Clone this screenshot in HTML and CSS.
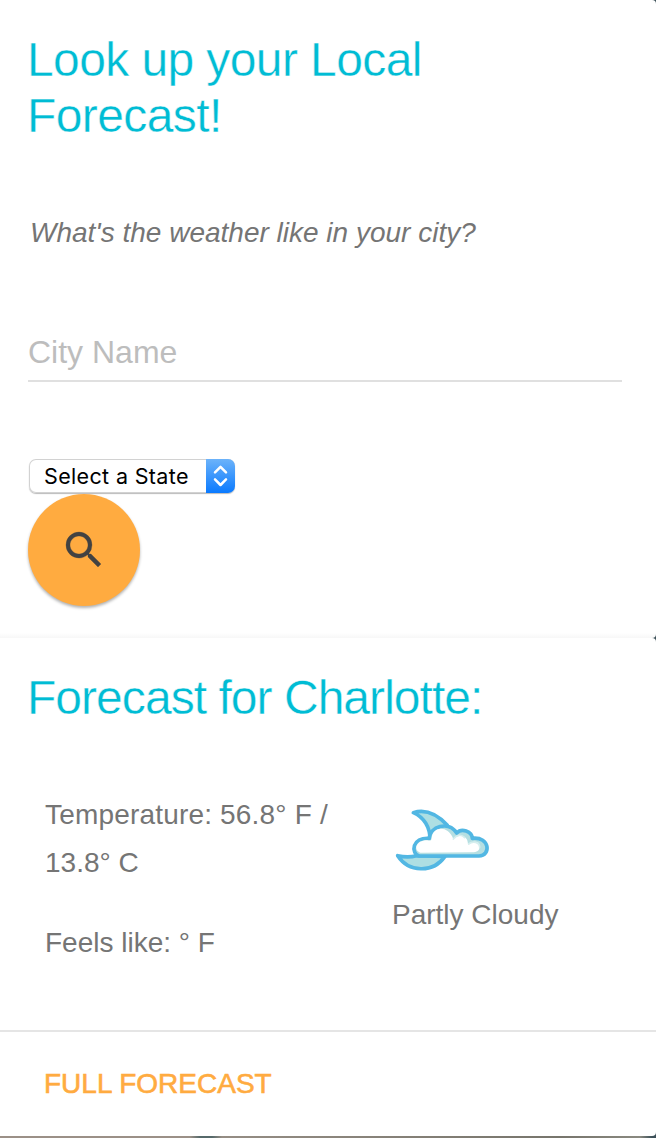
FILE: index.html
```html
<!DOCTYPE html>
<html lang="en">
<head>
<meta charset="utf-8">
<title>Local Forecast</title>
<link rel="stylesheet" href="styles.css">
</head>
<body>
<main class="page">
  <section class="card lookup">
    <h1 class="title">Look up your Local<br>Forecast!</h1>
    <p class="question"><span>What's the weather like in your city?</span></p>
    <input class="city" type="text" placeholder="City Name" aria-label="City Name">
    <button class="state" type="button">
      <span class="state-label">Select a State</span>
      <span class="state-arrows">
        <svg width="29" height="34" viewBox="0 0 29 34" fill="none" stroke="#fff" stroke-width="2.5" stroke-linecap="round" stroke-linejoin="round"><path d="M9 13.4l5.5-5.6 5.5 5.6M9 20.4l5.5 5.6 5.5-5.6"/></svg>
      </span>
    </button>
    <button class="search" type="button" aria-label="Search">
      <svg width="48" height="48" viewBox="0 0 24 24" fill="#424242" stroke="#424242" stroke-width=".15"><path d="M15.5 14h-.79l-.28-.27A6.471 6.471 0 0 0 16 9.5 6.5 6.5 0 1 0 9.5 16c1.61 0 3.09-.59 4.23-1.57l.27.28v.79l5 4.99L20.49 19l-4.99-5zm-6 0C7.01 14 5 11.99 5 9.5S7.01 5 9.5 5 14 7.01 14 9.5 11.99 14 9.5 14z"/></svg>
    </button>
  </section>
  <section class="card forecast">
    <h2 class="title city-title">Forecast for Charlotte:</h2>
    <div class="details">
      <div class="readings">
        <p class="temperature"><span class="wide">Temperature: 56.8° F /</span><br>13.8° C</p>
        <p class="feels">Feels like: ° F</p>
      </div>
      <div class="sky">
        <svg class="sky-icon" width="100" height="80" viewBox="36 30 300 240" stroke-linejoin="round" stroke-linecap="round">
          <path d="M100 68C145 54 178 80 202 106L150 150C151 112 132 82 100 68Z" fill="#addfe3" stroke="#52b7e3" stroke-width="11"/>
          <path d="M53 197C86 247 158 251 195 199L110 197C88 203 74 202 53 197Z" fill="#addfe3" stroke="#52b7e3" stroke-width="11"/>
          <path d="M118 198C91 190 96 141 148 145C149 110 205 91 230 129C244 113 276 123 277 145C331 139 333 198 297 198Z" fill="#b5dfe2" stroke="#52b7e3" stroke-width="11"/>
          <path d="M121 188C98 180 109 150 142 151C153 153 154 151 155 143C159 108 205 105 220 147C235 130 264 134 264 163C280 151 299 154 299 168C299 184 290 186 277 187Z" fill="#fff"/>
          <path d="M220 147C230 134 244 132 254 143M266 162C279 151 299 157 299 172" fill="none" stroke="#d5eeee" stroke-width="5"/>
        </svg>
        <p class="condition">Partly Cloudy</p>
      </div>
    </div>
    <footer class="action"><a class="full">FULL FORECAST</a></footer>
  </section>
</main>
</body>
</html>
```
FILE: styles.css
```css
* { box-sizing: border-box; }
body { margin: 0; background: #fff; font-family: "Liberation Sans", Arial, sans-serif; color: #757575; }
h1, h2, p { margin: 0; }
button, input { font: inherit; padding: 0; border: 0; outline: 0; }
.page {
  width: 656px; height: 1138px; display: flex; flex-direction: column; overflow: hidden;
  background: linear-gradient(90deg, #9b9087 0 190px, #56696a 200px 212px, #958d84 222px, #77756c 560px, #8a8980 640px, #3c5058 652px);
}
.card { background: #fff; border-radius: 0 4px 4px 0; }
.lookup {
  height: 638px; padding: 32px 34px 0 27px;
  display: flex; flex-direction: column; align-items: flex-start;
  background: linear-gradient(#fff 633px, #f7f7f7 638px);
}
.title { color: #00bcd4; font-size: 48px; line-height: 56px; font-weight: 400; white-space: nowrap; letter-spacing: -.6px; -webkit-text-stroke: .4px #fff; }
.question { margin: 65px 0 0 3px; font-size: 28px; line-height: 48px; font-style: italic; white-space: nowrap; }
.city { width: 594px; height: 60px; margin: 65px 0 0 1px; padding-top: 3px; border-bottom: 2px solid #e0e0e0; font-size: 32px; background: none; }
.city::placeholder { color: #bdbdbd; opacity: 1; }
.state {
  display: flex; width: 206px; height: 34px; margin: 77px 0 0 2px; overflow: hidden;
  border-radius: 7px; background: #fff; box-shadow: inset 0 0 0 1px #d2d2d2, 0 1px 1px #bbb;
}
.state-label { width: 177px; padding-left: 15px; text-align: left; font-family: Inter, sans-serif; font-size: 21.5px; letter-spacing: .35px; line-height: 34px; color: #000; white-space: nowrap; }
.state-arrows { width: 29px; height: 34px; background: linear-gradient(#6cb3fa, #0a7aff); }
.state-arrows svg, .search svg { display: block; }
.search {
  width: 112px; height: 112px; margin: 1px 0 0 1px; border-radius: 50%; background: #ffab40;
  display: grid; place-items: center; box-shadow: 0 2px 3px rgba(0,0,0,.3);
}
.forecast { height: 498px; padding-top: 32px; display: flex; flex-direction: column; }
.city-title { padding-left: 27px; letter-spacing: -.96px; }
.details { display: flex; height: 304px; padding: 65px 0 0 45px; font-size: 28px; line-height: 48px; white-space: nowrap; }
.wide { letter-spacing: .18px; }
.readings { width: 347px; }
.feels { margin-top: 32px; }
.sky { padding-top: 9px; }
.sky-icon { display: block; }
.condition { margin-top: 11px; }
.action { height: 106px; padding: 28px 0 0 44px; border-top: 2px solid #e5e5e5; }
.full { display: block; color: #ffab40; font-size: 28px; line-height: 48px; -webkit-text-stroke: .6px #ffab40; }
```
